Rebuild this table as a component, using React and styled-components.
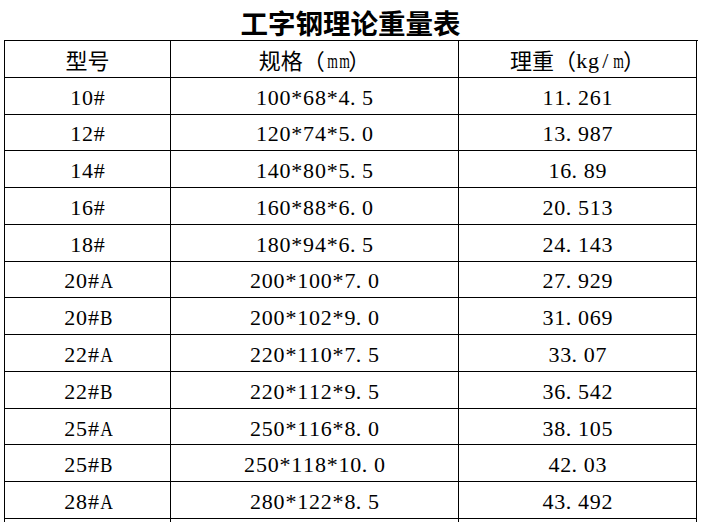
import React from "react";
import styled, { createGlobalStyle } from "styled-components";

const Global = createGlobalStyle`
  html, body { margin: 0; padding: 0; background: #fff; overflow: hidden; }
  body { font-family: "Liberation Serif", "Noto Sans CJK SC", serif; color: #000; }
`;

const Page = styled.div`
  width: 702px;
  height: 522px;
  padding-left: 4px;
  box-sizing: border-box;
  overflow: hidden;
`;

const Title = styled.h1`
  margin: 0;
  height: 40px;
  padding-top: 5px;
  box-sizing: border-box;
  line-height: 35px;
  text-align: center;
  font-family: "Noto Sans CJK SC", sans-serif;
  font-weight: 700;
  font-size: 27.5px;
  width: 693px;
`;

const Grid = styled.div`
  display: grid;
  grid-template-columns: 166px 288px 238px;
  grid-auto-rows: 36.77px;
  width: 693px;
  border-left: 1px solid #000;
  border-top: 1px solid #000;
`;

const Cell = styled.div`
  display: flex;
  align-items: center;
  justify-content: center;
  border-right: 1px solid #000;
  border-bottom: 1px solid #000;
  box-sizing: border-box;
  font-size: 22px;
  white-space: nowrap;
  padding-top: 4px;
`;

const Ch = styled.span`
  display: inline-block;
  width: 11.8px;
  text-align: ${(p) => (p.$dot ? "left" : "center")};
  font-family: "Liberation Serif", serif;
  transform: scaleX(${(p) => p.$sx});
`;

const Cjk = styled.span`
  display: inline-block;
  font-family: "Noto Sans CJK SC", sans-serif;
  font-size: 22px;
  line-height: 1;
  transform: translateY(-2px);
`;

const squeeze = { m: 0.62, A: 0.8, B: 0.85 };

function Txt({ s }) {
  return Array.from(s).map((c, i) =>
    c.charCodeAt(0) < 128 ? (
      <Ch key={i} $dot={c === "."} $sx={squeeze[c] || 1}>
        {c}
      </Ch>
    ) : (
      <Cjk key={i}>{c}</Cjk>
    )
  );
}

const rows = [
  ["10#", "100*68*4.5", "11.261"],
  ["12#", "120*74*5.0", "13.987"],
  ["14#", "140*80*5.5", "16.89"],
  ["16#", "160*88*6.0", "20.513"],
  ["18#", "180*94*6.5", "24.143"],
  ["20#A", "200*100*7.0", "27.929"],
  ["20#B", "200*102*9.0", "31.069"],
  ["22#A", "220*110*7.5", "33.07"],
  ["22#B", "220*112*9.5", "36.542"],
  ["25#A", "250*116*8.0", "38.105"],
  ["25#B", "250*118*10.0", "42.03"],
  ["28#A", "280*122*8.5", "43.492"],
];

export default function App() {
  return (
    <>
      <Global />
      <Page>
        <Title>工字钢理论重量表</Title>
        <Grid>
          <Cell><Txt s="型号" /></Cell>
          <Cell><Txt s="规格（mm）" /></Cell>
          <Cell><Txt s="理重（kg/m）" /></Cell>
          {rows.map((r) =>
            r.map((v, j) => (
              <Cell key={r[0] + j}>
                <Txt s={v} />
              </Cell>
            ))
          )}
          <Cell />
          <Cell />
          <Cell />
        </Grid>
      </Page>
    </>
  );
}
